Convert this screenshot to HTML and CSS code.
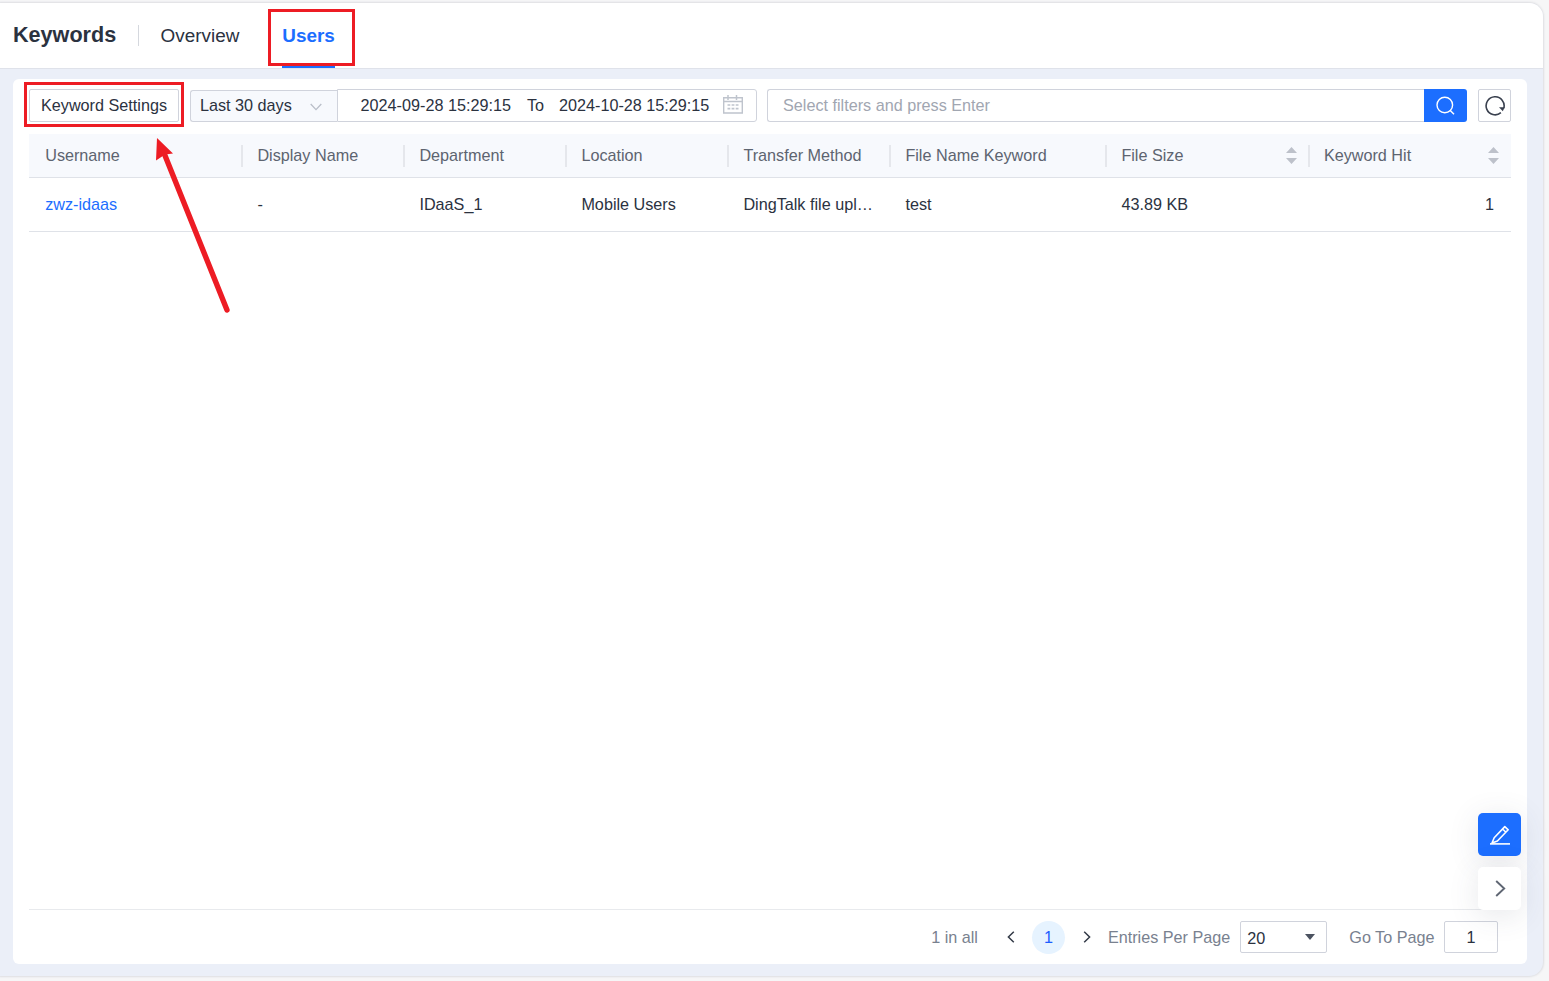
FILE: index.html
```html
<!DOCTYPE html>
<html lang="en">
<head>
  <meta charset="UTF-8" />
  <meta name="viewport" content="width=device-width, initial-scale=1.0" />
  <title>Keywords</title>
  <link rel="stylesheet" href="styles.css">
</head>
<body>
  <div class="app">
    <header class="header">
      <h1>Keywords</h1>
      <span class="divider"></span>
      <nav class="tabs">
        <a class="tab">Overview</a>
        <a class="tab active">Users</a>
      </nav>
    </header>

    <main class="card">
      <div class="toolbar">
        <button class="btn settings">Keyword Settings</button>
        <div class="range">
          <div class="preset">
            <span>Last 30 days</span>
            <svg width="12" height="8" viewBox="0 0 12 8"><path d="M.7 1 6 6.600 11.300 1" fill="none" stroke="#b9bec8" stroke-width="1.300"/></svg>
          </div>
          <div class="dates">
            <span class="from">2024-09-28 15:29:15</span>
            <span class="to">To</span>
            <span class="until">2024-10-28 15:29:15</span>
            <svg class="calendar" width="20" height="19" viewBox="0 0 20 19" fill="none" stroke="#bfc4cd">
              <path d="M.7 2.700h18.600v15.300H.7zM.7 6.500h18.600" stroke-width="1.400"/>
              <path d="M5 0v5M13.500 0v5" stroke-width="1.500"/>
              <path d="M4.500 10h2.800M8.600 10h2.800M12.700 10h2.800M4.500 13.600h2.800M8.600 13.600h2.800M12.700 13.600h2.800" stroke-width="1.600"/>
            </svg>
          </div>
        </div>
        <div class="search">
          <input type="text" placeholder="Select filters and press Enter">
          <button class="search-btn">
            <svg width="19" height="19" viewBox="0 0 19 19" fill="none" stroke="#fff" stroke-width="1.400"><circle cx="8.800" cy="9" r="7.800"/><path d="m14 14.200 4 4"/></svg>
          </button>
        </div>
        <button class="btn refresh">
          <svg width="20" height="20" viewBox="0 0 20 20"><path d="M18.800 12.200A9 9 0 1 0 15.900 16.700" fill="none" stroke="#3a414f" stroke-width="1.600"/><path d="M14 11.300h5.700l-1.900 4z" fill="#3a414f"/></svg>
        </button>
      </div>

      <div class="table">
        <div class="row head">
          <div class="cell">Username</div>
          <div class="cell">Display Name</div>
          <div class="cell">Department</div>
          <div class="cell">Location</div>
          <div class="cell">Transfer Method</div>
          <div class="cell">File Name Keyword</div>
          <div class="cell sortable">File Size
            <svg width="11" height="17" viewBox="0 0 11 17" fill="#bdc1ca"><path d="M5.500 0 11 6H0zM0 11h11l-5.500 6z"/></svg>
          </div>
          <div class="cell sortable">Keyword Hit
            <svg width="11" height="17" viewBox="0 0 11 17" fill="#bdc1ca"><path d="M5.500 0 11 6H0zM0 11h11l-5.500 6z"/></svg>
          </div>
        </div>
        <div class="row">
          <div class="cell"><a class="user">zwz-idaas</a></div>
          <div class="cell">-</div>
          <div class="cell">IDaaS_1</div>
          <div class="cell">Mobile Users</div>
          <div class="cell">DingTalk file upl…</div>
          <div class="cell">test</div>
          <div class="cell">43.89 KB</div>
          <div class="cell number">1</div>
        </div>
      </div>

      <footer class="pager">
        <span class="total">1 in all</span>
        <svg class="prev" width="8" height="12" viewBox="0 0 8 12"><path d="M6.800.8 1.400 6l5.400 5.200" fill="none" stroke="#333a47" stroke-width="1.500"/></svg>
        <span class="page">1</span>
        <svg class="next" width="8" height="12" viewBox="0 0 8 12"><path d="M1.200.8 6.600 6l-5.400 5.200" fill="none" stroke="#333a47" stroke-width="1.500"/></svg>
        <span class="label">Entries Per Page</span>
        <div class="size">20
          <svg width="10" height="6" viewBox="0 0 10 6"><path d="M0 0h10L5 6z" fill="#4b5260"/></svg>
        </div>
        <span class="label goto">Go To Page</span>
        <input class="page-input" type="text" value="1">
      </footer>
    </main>
  </div>

  <div class="floating">
    <button class="edit">
      <svg width="20" height="20" viewBox="0 0 20 20" fill="none" stroke="#fff" stroke-width="1.600"><path d="M0 18.900h20"/><path d="M2 18 4.200 12.800 14.800 1.600 18.200 4.800 7.400 16zM12.600 4l3.300 3.200" stroke-linejoin="round"/></svg>
    </button>
    <button class="expand">
      <svg width="11" height="17" viewBox="0 0 11 17"><path d="m1.200 1 8 7.500-8 7.500" fill="none" stroke="#5f6673" stroke-width="1.900"/></svg>
    </button>
  </div>

  <div class="mark mark-tab"></div>
  <div class="mark mark-settings"></div>
  <svg class="arrow" width="80" height="184" viewBox="150 133 80 184">
    <path d="M164 153 227 310" stroke="#ed1c24" stroke-width="5.400" stroke-linecap="round"/>
    <path d="M157 138 173 153.500 165 154.500 156 160.500z" fill="#ed1c24"/>
  </svg>
</body>
</html>
```

FILE: styles.css
```css
* {
  box-sizing: border-box;
}
body {
  margin: 0;
  height: 981px;
  padding-top: 3px;
  overflow: hidden;
  background: #f6f6f7;
  color: #2b323f;
  font-family: "Liberation Sans", Arial, sans-serif;
  font-size: 16.2px;
}
button, input {
  font: inherit;
  color: inherit;
  padding: 0;
}
svg {
  display: block;
  flex: none;
}
.app {
  width: 1543px;
  height: 973px;
  background: #ebeff8;
  border-radius: 0 14px 14px 0;
  box-shadow: 0 0 2px 1px #dddee2;
  overflow: hidden;
}
.header {
  display: flex;
  align-items: center;
  height: 66px;
  padding-left: 13px;
  background: #fff;
  border-bottom: 1px solid #dfe2ea;
}
h1 {
  margin: 0 22px 2px 0;
  font-size: 21.6px;
  line-height: 30px;
}
.divider {
  width: 1px;
  height: 21px;
  background: #d5d8de;
}
.tabs {
  display: flex;
  gap: 43px;
  height: 100%;
  margin-left: 21.4px;
}
.tab {
  font-size: 18.9px;
  line-height: 66px;
}
.tab.active {
  color: #1c6eff;
  font-weight: bold;
  border-bottom: 3px solid #1c6eff;
}
.card {
  display: flex;
  flex-direction: column;
  width: 1514px;
  height: 885px;
  margin: 10px 0 0 13px;
  padding: 10px 16px 0;
  background: #fff;
  border-radius: 6px;
}
.toolbar {
  display: flex;
  height: 33px;
  margin-bottom: 12px;
}
.btn {
  background: #fff;
  border: 1px solid #d0d3dc;
  border-radius: 2px;
}
.settings {
  width: 150px;
  margin-right: 11px;
}
.range {
  display: flex;
  align-items: flex-end;
  width: 567px;
  margin-right: 10px;
}
.preset {
  display: flex;
  align-items: center;
  justify-content: space-between;
  width: 147px;
  height: 32px;
  padding: 0 15px 2px 9px;
  background: #f7f9fd;
  border: 1px solid #d0d3dc;
  border-right: 0;
  border-radius: 3px 0 0 3px;
}
.preset svg {
  margin-top: 3px;
}
.dates {
  display: flex;
  align-items: center;
  width: 420px;
  height: 33px;
  padding-left: 22.6px;
  border: 1px solid #d0d3dc;
  border-radius: 0 3px 3px 0;
}
.to {
  margin: 0 15px 0 16px;
}
.calendar {
  margin: -3px 0 0 14px;
}
.search {
  display: flex;
  flex: 1;
  margin-right: 11px;
}
.search input {
  flex: 1;
  padding-left: 15px;
  border: 1px solid #d0d3dc;
  border-right: 0;
  border-radius: 3px 0 0 3px;
}
.search input::placeholder {
  color: #a1a6b1;
}
.search-btn {
  display: flex;
  align-items: center;
  justify-content: center;
  width: 43px;
  background: #1c6eff;
  border: 0;
  border-radius: 0 3px 3px 0;
}
.refresh {
  display: flex;
  align-items: center;
  justify-content: center;
  width: 33px;
}
.row {
  display: grid;
  grid-template-columns: 213px 162px 162px 162px 162px 216px 202.5px 202.5px;
  height: 54px;
  align-items: center;
  border-bottom: 1px solid #dfe2e8;
}
.head {
  height: 44px;
  background: #f7f9fd;
  color: #5d6470;
}
.cell {
  padding: 0 16px 0 15.4px;
  white-space: nowrap;
}
.cell:first-child {
  padding-left: 16.2px;
}
.head .cell {
  height: 22px;
  line-height: 20px;
  margin-right: -1px;
  border-right: 2px solid #e5e7ec;
}
.head .cell:last-child {
  margin-right: 0;
  border-right: 0;
}
.sortable {
  display: flex;
  align-items: center;
  justify-content: space-between;
}
.head .sortable {
  line-height: 22px;
  padding-bottom: 1px;
}
.sortable svg {
  margin: 1px -5px 0 0;
}
.head .cell:last-child svg {
  margin-right: -4px;
}
.user {
  color: #1c6eff;
}
.number {
  padding-right: 17px;
  text-align: right;
}
.pager {
  display: flex;
  align-items: center;
  justify-content: flex-end;
  height: 55px;
  margin-top: auto;
  padding-right: 13px;
  border-top: 1px solid #e8eaed;
  color: #79818f;
}
.prev {
  margin: 0 17px 0 29px;
}
.page {
  width: 33px;
  height: 33px;
  line-height: 33px;
  text-align: center;
  color: #1c5eff;
  background: #e6f3ff;
  border-radius: 50%;
}
.next {
  margin: 0 17px 0 18px;
}
.size {
  display: flex;
  align-items: center;
  justify-content: space-between;
  width: 87px;
  height: 32px;
  margin-left: 10px;
  padding: 2px 11px 0 6px;
  color: #2b323f;
  border: 1px solid #d0d3dc;
  border-radius: 2px;
}
.size svg {
  margin-top: -3px;
}
.goto {
  margin: 0 9.5px 0 22px;
}
.page-input {
  width: 54px;
  height: 32px;
  text-align: center;
  color: #2b323f;
  border: 1px solid #d0d3dc;
  border-radius: 2px;
}
/* buttons that hover over the table */
.floating {
  position: absolute;
  left: 1478px;
  top: 813px;
  display: grid;
  gap: 11px;
}
.floating button {
  display: flex;
  align-items: center;
  justify-content: center;
  width: 43px;
  height: 43px;
  border: 0;
  border-radius: 5px;
  box-shadow: 0 5px 30px rgba(60, 70, 90, 0.13);
}
.floating .edit {
  background: #1c6eff;
  padding-top: 1px;
}
.expand {
  background: #fff;
}
.expand svg {
  margin-left: 2px;
}
/* red callouts */
.mark {
  position: absolute;
  border: 3px solid #ed1c24;
}
.mark-tab {
  left: 268px;
  top: 9px;
  width: 87px;
  height: 57px;
}
.mark-settings {
  left: 24px;
  top: 82px;
  width: 160px;
  height: 45px;
}
.arrow {
  position: absolute;
  left: 150px;
  top: 133px;
}
```
